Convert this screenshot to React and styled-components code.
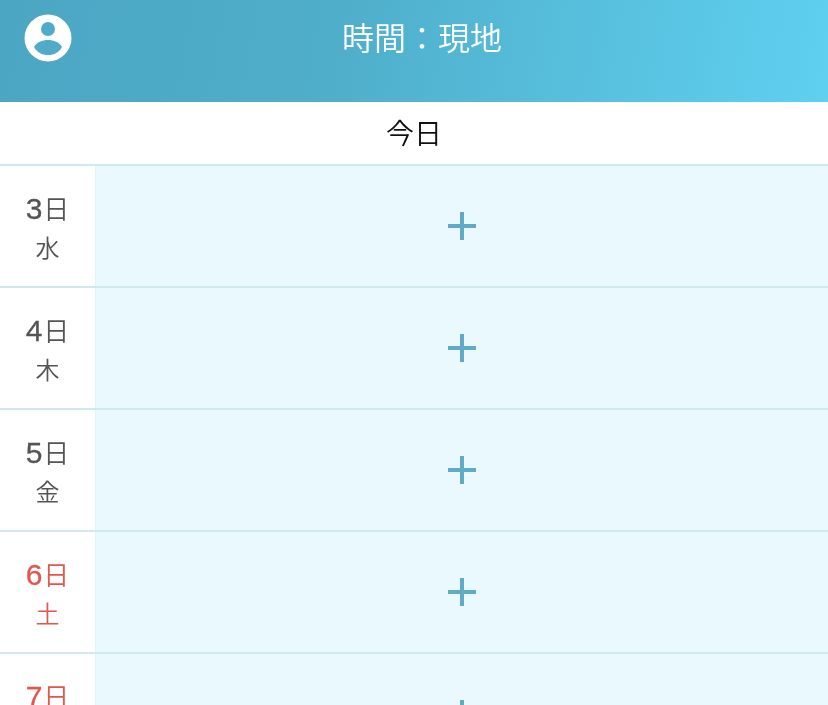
import styled, { createGlobalStyle } from 'styled-components';

const GlobalStyle = createGlobalStyle`
  html, body {
    margin: 0;
    padding: 0;
    height: 100%;
    overflow: hidden;
    background: #fff;
  }
  body {
    font-family: "Liberation Sans", "Noto Sans CJK JP", sans-serif;
  }
`;

const Page = styled.div`
  width: 828px;
  height: 705px;
  overflow: hidden;
  will-change: opacity;
`;

const Header = styled.header`
  height: 102px;
  background: linear-gradient(100deg, #4ba6c4 0%, #4faeca 40%, #5fd0f0 100%);
  padding: 14px 24px 0;
  box-sizing: border-box;
  display: grid;
  grid-template-columns: 48px 1fr 48px;
  align-items: start;
`;

const Title = styled.h1`
  margin: 1px 0 0;
  padding-left: 16px;
  color: #fff;
  font-size: 32px;
  font-weight: 350;
  line-height: 48px;
  text-align: center;
`;

const TodayBar = styled.div`
  height: 62px;
  line-height: 65px;
  text-align: center;
  font-size: 28px;
  font-weight: 350;
  color: #111;
`;

const Row = styled.div`
  display: flex;
  height: 120px;
  border-top: 2px solid #cfe9ef;
`;

const DateCell = styled.div`
  width: 95px;
  flex: none;
  display: flex;
  flex-direction: column;
  align-items: center;
  color: ${p => (p.$holiday ? '#e2564c' : '#555')};
  border-right: 1px solid #e3f3f7;
`;

const DayLine = styled.div`
  margin-top: 21px;
  display: flex;
  align-items: baseline;
  gap: 1px;
  line-height: 44px;
  white-space: nowrap;
`;

const DayNumber = styled.span`
  font-size: 30px;
  -webkit-text-stroke: 0.3px currentColor;
`;

const DayUnit = styled.span`
  font-size: 26px;
  font-weight: 350;
`;

const Weekday = styled.div`
  font-size: 24px;
  font-weight: 350;
  line-height: 34px;
`;

const AddCell = styled.div`
  flex: 1;
  background: #e9f9fe;
  display: flex;
  align-items: center;
  justify-content: center;
`;

const PlusIcon = styled.svg`
  display: block;
  width: 28px;
  height: 28px;
`;

const days = [
  { day: 3, week: '水' },
  { day: 4, week: '木' },
  { day: 5, week: '金' },
  { day: 6, week: '土', holiday: true },
  { day: 7, week: '日', holiday: true },
];

const UserIcon = () => (
  <svg width="48" height="48" viewBox="0 0 48 48">
    <circle cx="24" cy="24" r="23.5" fill="#fff" />
    <circle cx="24" cy="15" r="7" fill="#4fabc8" />
    <path d="M10 33 C13 28 18 26 24 26 C30 26 35 28 38 33 C35 38.5 30 41 24 41 C18 41 13 38.5 10 33 Z" fill="#4fabc8" />
  </svg>
);

const App = () => {
  return (
    <Page>
      <GlobalStyle />
      <Header>
        <UserIcon />
        <Title>時間：現地</Title>
      </Header>
      <TodayBar>今日</TodayBar>
      {days.map(d => (
        <Row key={d.day}>
          <DateCell $holiday={d.holiday}>
            <DayLine>
              <DayNumber>{d.day}</DayNumber>
              <DayUnit>日</DayUnit>
            </DayLine>
            <Weekday>{d.week}</Weekday>
          </DateCell>
          <AddCell>
            <PlusIcon viewBox="0 0 28 28">
              <path d="M12 0h4v12h12v4H16v12h-4V16H0v-4h12z" fill="#62abc8" />
            </PlusIcon>
          </AddCell>
        </Row>
      ))}
    </Page>
  );
};

export default App;
